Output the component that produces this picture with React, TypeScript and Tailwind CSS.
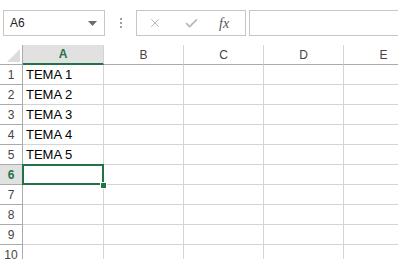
import { X, Check } from 'lucide-react'

const cols = ['A', 'B', 'C', 'D', 'E']
const rows = [1, 2, 3, 4, 5, 6, 7, 8, 9, 10]
const data: Record<number, string> = { 1: 'TEMA 1', 2: 'TEMA 2', 3: 'TEMA 3', 4: 'TEMA 4', 5: 'TEMA 5' }

export default function App() {
  return (
    <div className="w-[398px] h-[259px] overflow-hidden bg-white text-black" style={{ fontFamily: '"Liberation Sans", Arial, sans-serif' }}>
      {/* formula bar */}
      <div className="h-[45px] flex items-start pt-[10px] pl-[3px]">
        <div className="w-[102px] h-[26px] border border-[#c6c6c6] flex items-center justify-between pl-[6px] pr-[7px]">
          <span className="text-[12px] text-[#222]">A6</span>
          <svg width="9" height="5" viewBox="0 0 9 5"><path d="M0 0h9L4.5 5z" fill="#6d6d6d" /></svg>
        </div>
        <div className="w-[31px] h-[26px] flex items-center justify-center">
          <div className="flex flex-col gap-[2px]">
            <span className="w-[2px] h-[2px] bg-[#a0a0a0]" />
            <span className="w-[2px] h-[2px] bg-[#a0a0a0]" />
            <span className="w-[2px] h-[2px] bg-[#a0a0a0]" />
          </div>
        </div>
        <div className="w-[110px] h-[26px] border border-[#c6c6c6] flex items-center pl-[11px]">
          <X className="w-[14px] h-[14px] text-[#b4b4b4]" strokeWidth={1.6} />
          <Check className="w-[15px] h-[15px] text-[#b4b4b4] ml-[22px]" strokeWidth={2.6} />
          <span className="ml-[20px] text-[14px] italic text-[#555]" style={{ fontFamily: '"Liberation Serif", serif' }}>fx</span>
        </div>
        <div className="ml-[3px] flex-1 h-[26px] border border-r-0 border-[#c6c6c6]" />
      </div>

      {/* grid */}
      <div className="flex flex-col text-[13px]">
        <div className="flex h-[20px]">
          <div className="w-[23px] shrink-0 border-r border-b border-[#ababab] relative">
            <svg className="absolute right-[2px] bottom-[2px]" width="13" height="13" viewBox="0 0 13 13"><path d="M13 0V13H0z" fill="#dcdcdc" /></svg>
          </div>
          {cols.map((c) => (
            <div
              key={c}
              className={
                c === 'A'
                  ? 'w-[81px] shrink-0 bg-[#e1e1e1] border-r border-[#d4d4d4] border-b-2 border-b-[#217346] text-[#217346] font-bold flex items-center justify-center text-[12px]'
                  : 'w-[80px] shrink-0 border-r border-[#d4d4d4] border-b border-b-[#ababab] text-[#444] flex items-center justify-center text-[12px]'
              }
            >
              {c}
            </div>
          ))}
        </div>
        {rows.map((r) => (
          <div key={r} className="flex h-[20px]">
            <div
              className={
                r === 6
                  ? 'w-[23px] shrink-0 bg-[#e1e1e1] border-r border-b border-[#ababab] text-[#217346] font-bold flex items-center justify-center text-[12px]'
                  : 'w-[23px] shrink-0 border-r border-b border-[#ababab] text-[#444] flex items-center justify-center text-[12px]'
              }
            >
              {r}
            </div>
            {cols.map((c) => (
              <div
                key={c}
                className={(c === 'A' ? 'w-[81px] ' : 'w-[80px] ') + 'shrink-0 border-r border-b border-[#d4d4d4] relative flex items-center pl-[3px] pt-[1px]'}
              >
                {c === 'A' && data[r]}
                {c === 'A' && r === 6 && (
                  <>
                    <div className="absolute z-10 -left-[1px] -top-[1px] right-[-1px] bottom-[-1px] border-2 border-[#217346]" />
                    <div className="absolute z-20 right-[-4px] bottom-[-5px] w-[7px] h-[7px] bg-[#217346] border border-white" />
                  </>
                )}
              </div>
            ))}
          </div>
        ))}
      </div>
    </div>
  )
}
